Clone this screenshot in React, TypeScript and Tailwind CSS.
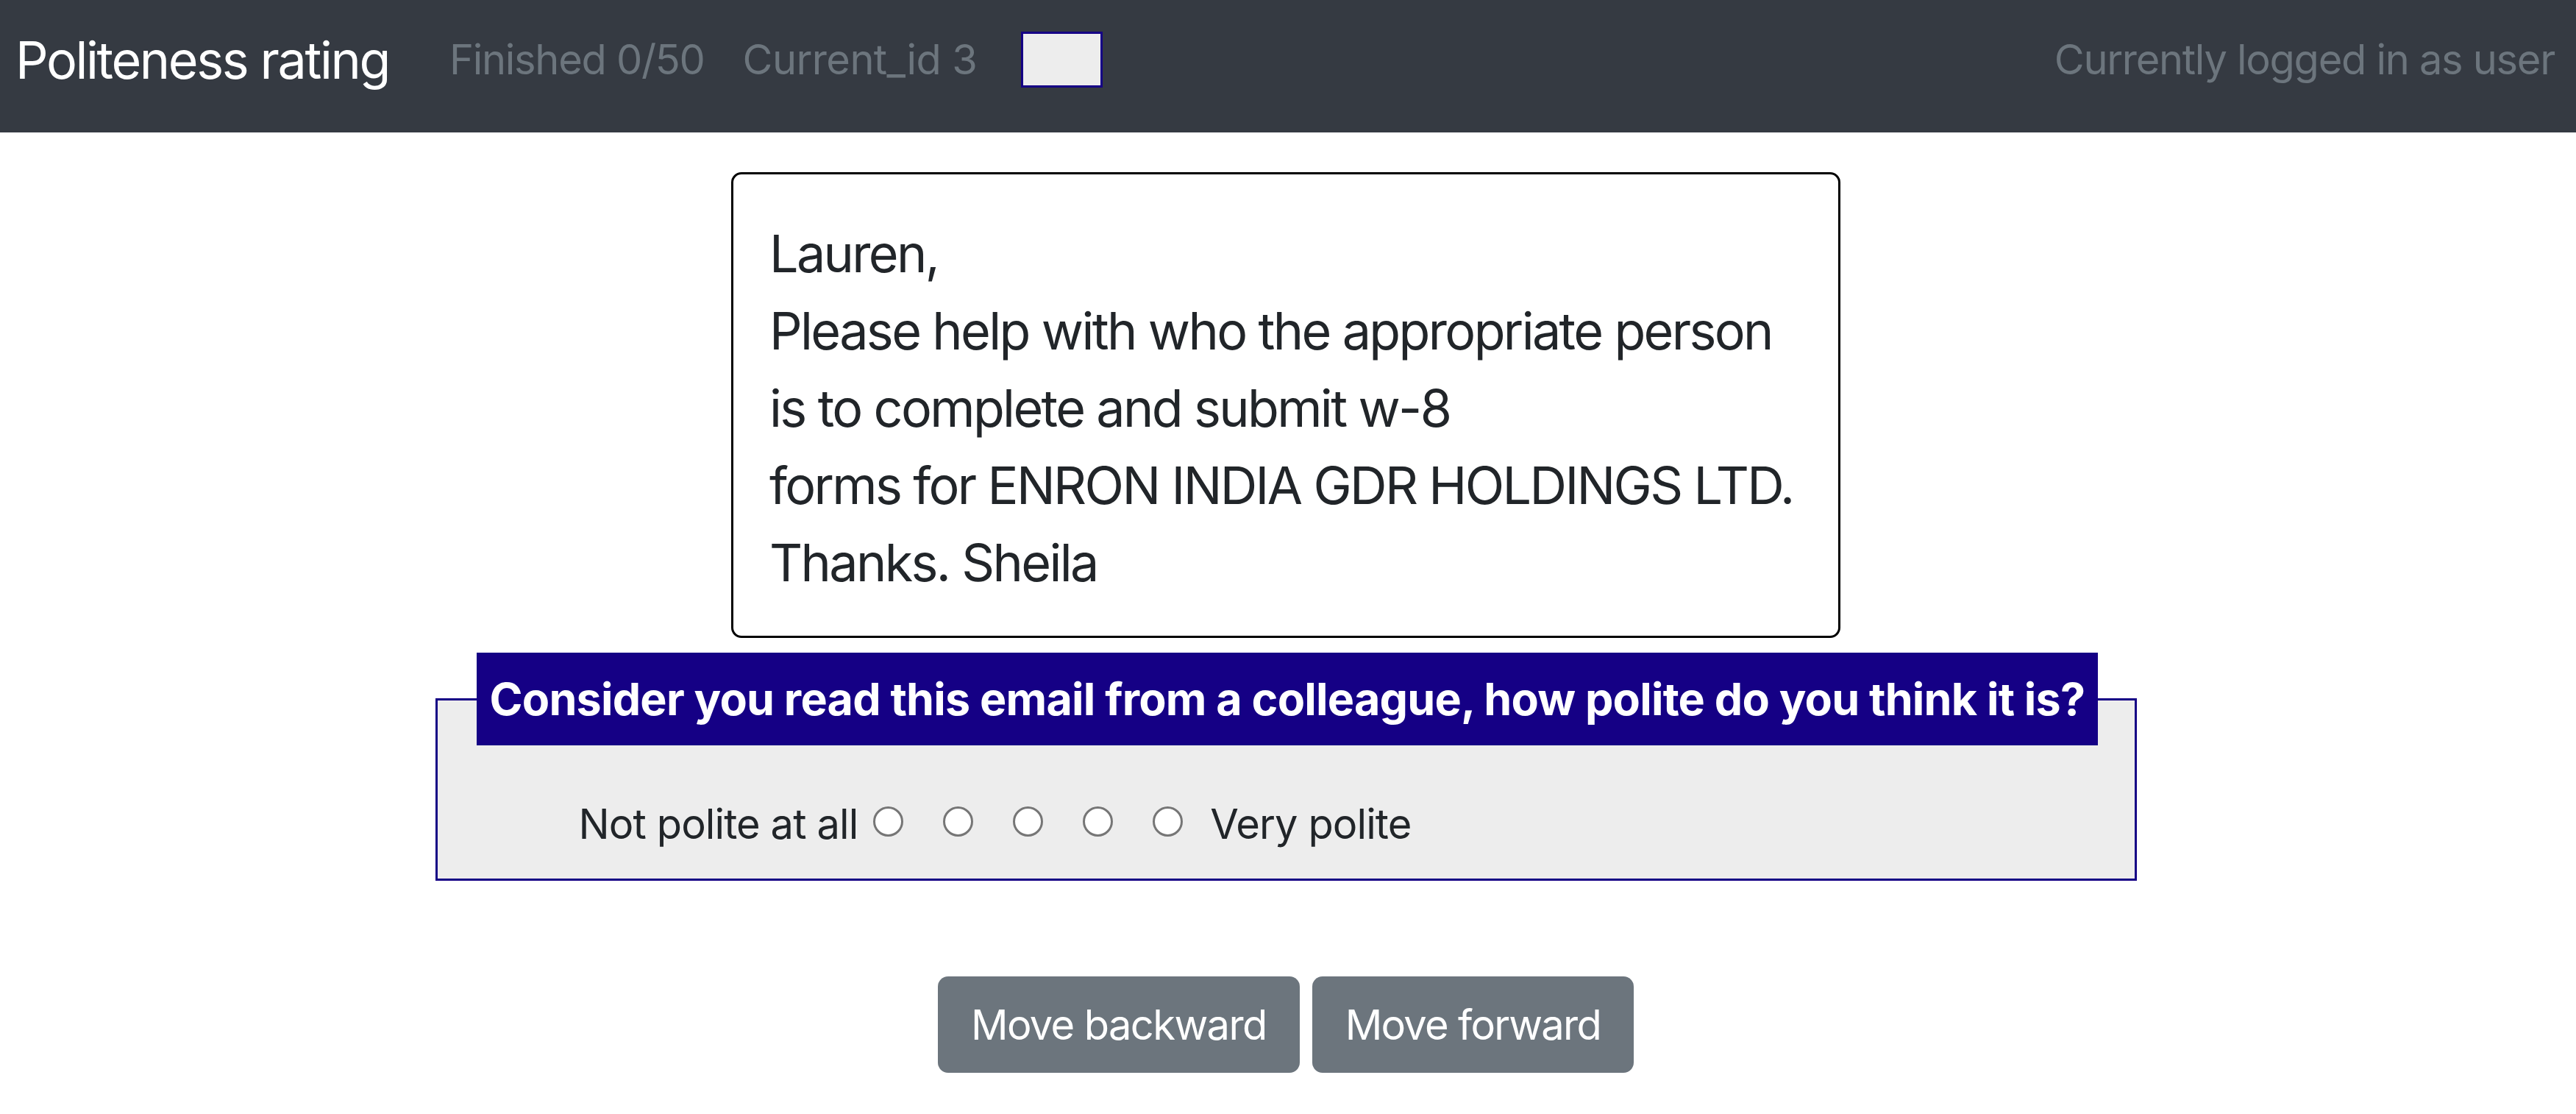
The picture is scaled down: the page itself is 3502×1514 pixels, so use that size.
import React from "react";

export default function App() {
  return (
    <div className="min-h-[1514px] bg-white font-['Inter',sans-serif] text-[#212529]">
      <nav className="flex h-[180px] items-center bg-[#353a42] pb-[18px] pl-[21px] pr-[29px]">
        <span className="whitespace-nowrap text-[70px] leading-[105px] tracking-[-2.4px] text-white">
          Politeness rating
        </span>
        <span className="ml-[82px] whitespace-nowrap text-[56px] leading-[84px] tracking-[-1.3px] text-[#6c757d]">
          Finished 0/50
        </span>
        <span className="ml-[52px] whitespace-nowrap text-[56px] leading-[84px] tracking-[-0.6px] text-[#6c757d]">
          Current_id 3
        </span>
        <input
          type="checkbox"
          className="ml-[60px] h-[76px] w-[111px] appearance-none border-[3px] border-[#150085] bg-[#ededed]"
        />
        <span className="ml-auto whitespace-nowrap text-[56px] leading-[84px] tracking-[-1.3px] text-[#6c757d]">
          Currently logged in as user
        </span>
      </nav>

      <main className="flex flex-col items-center pr-[6px]">
        <div className="mt-[54px] w-[1508px] rounded-[14px] border-[3px] border-black pb-[47px] pl-[49px] pt-[55px] text-[70px] leading-[105px] tracking-[-2.65px]">
          <div className="whitespace-nowrap">Lauren,</div>
          <div className="whitespace-nowrap">Please help with who the appropriate person</div>
          <div className="whitespace-nowrap">is to complete and submit w-8</div>
          <div className="whitespace-nowrap">forms for ENRON INDIA GDR HOLDINGS LTD.</div>
          <div className="whitespace-nowrap">Thanks. Sheila</div>
        </div>

        <fieldset className="mt-[20px] w-[2313px] min-w-0 border-[3px] border-[#150085] bg-[#ededed] pb-[32px] pl-[53px]">
          <legend className="whitespace-nowrap bg-[#150085] px-[18px] py-[17px] text-[61px] font-bold leading-[92px] tracking-[-0.8px] text-white">
            Consider you read this email from a colleague, how polite do you think it is?
          </legend>
          <div className="ml-[139px] mt-[65px] flex h-[84px] items-center text-[56px] leading-[84px] tracking-[-0.9px]">
            <span className="whitespace-nowrap">Not polite at all</span>
            <div className="mb-[8px] ml-[21px] flex items-center gap-[54px]">
              {[1, 2, 3, 4, 5].map((v) => (
                <input
                  key={v}
                  type="radio"
                  name="politeness"
                  value={v}
                  className="m-0 h-[41px] w-[41px] appearance-none rounded-full border-[3px] border-[#767676] bg-white"
                />
              ))}
            </div>
            <span className="ml-[37px] whitespace-nowrap">Very polite</span>
          </div>
        </fieldset>

        <div className="mt-[130px] flex gap-[17px]">
          <button className="flex h-[131px] items-center rounded-[14px] bg-[#6c757d] px-[45px] text-[56px] leading-[84px] tracking-[-1.6px] text-white">
            Move backward
          </button>
          <button className="flex h-[131px] items-center rounded-[14px] bg-[#6c757d] px-[45px] text-[56px] leading-[84px] tracking-[-1.7px] text-white">
            Move forward
          </button>
        </div>
      </main>
    </div>
  );
}
